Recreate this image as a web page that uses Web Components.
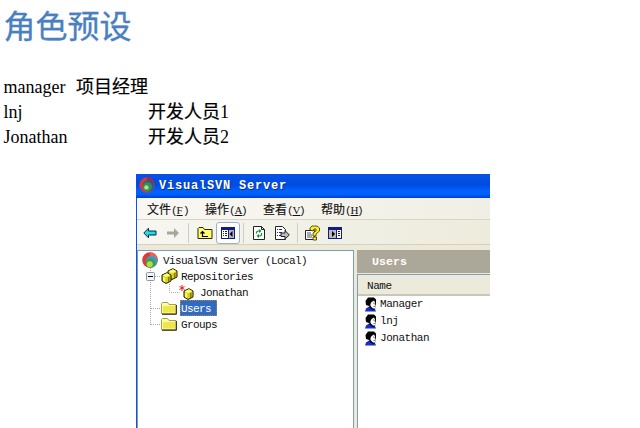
<!DOCTYPE html>
<html lang="zh"><head><meta charset="utf-8"><title>角色预设</title>
<style>html,body{margin:0;background:#fff}body{width:640px;height:428px;overflow:hidden}</style></head>
<body><role-page></role-page>
<script>
const define=(name,css,html)=>customElements.define(name,class extends HTMLElement{
  constructor(){super();this.attachShadow({mode:'open'}).innerHTML=`<style>${css}</style>${html}`}
});
const barrel=(x,y)=>`<g transform="translate(${x} ${y})"><path d="M1 3 6 .7 10 3v6L5 11.5 1 9z" fill="#d8ce20" stroke="#171700"/><path d="M1.6 3.3 6 1.3 9.3 3.2 5 5.2z" fill="#ffff70"/><path d="M2 4.5v4.3l2.2 1.4V5.8z" fill="#fff86a"/><path d="M7.5 5v5M9 4.5v4.5" stroke="#837c00"/></g>`;
const icons={
 logo:[16,16,`<circle cx="8" cy="8" r="7.8" fill="#e03a30"/><path d="M8 .2a7.8 7.8 0 0 1 7.8 8L13 8 8 4z" fill="#f06052"/><circle cx="9.5" cy="9.5" r="5.8" fill="#3a9ad9"/><circle cx="8.5" cy="11" r="4.8" fill="#36a344"/><circle cx="7.8" cy="12.2" r="3" fill="#b6d94a"/>`],
 tlogo:[16,16,`<circle cx="8" cy="8" r="7.7" fill="#d03a3c"/><path d="M8 .3A7.7 7.7 0 0 1 15.7 8L8 6z" fill="#a82545"/><circle cx="9.2" cy="9" r="5.6" fill="#185fa8"/><circle cx="8.4" cy="9.8" r="4.6" fill="#329544"/><circle cx="7.4" cy="10.4" r="2.2" fill="#b2dca0"/>`],
 back:[14,12,`<path d="M.8 6 5.5 1.2V4H13v4H5.5v2.8z" fill="#20dce4" stroke="#052b38"/>`],
 fwd:[14,12,`<path d="M13 6 8 1v3.5H1v3h7V11z" fill="#aaa69a"/>`],
 up:[16,14,`<path d="M1 12.5v-10l1-1h4l1.5 2H15v9z" fill="#ffff70" stroke="#292900"/><path d="M5.5 6v4.5H11M3.5 7.5l2-2 2 2" fill="none" stroke="#000" stroke-width="1.2"/>`],
 tree:[14,12,`<path d="M0 0h14v12H0z" fill="#111d84"/><path d="M1 3h6v8H1z" fill="#fff"/><path d="M8 3h5v8H8z" fill="#b9b9bb"/><path d="M2 4.5h1m1 0h2M2 6.5h1m1 0h2M2 8.5h1m1 0h2" stroke="#222"/><path d="M11.5 4v6l-3-3z"/>`],
 panel:[14,12,`<path d="M0 0h14v12H0z" fill="#111d84"/><path d="M1 3h7v8H1z" fill="#b9b9bb"/><path d="M9 3h4v8H9z" fill="#fff"/><path d="M10 4.5h2M10 6.5h2M10 8.5h2" stroke="#222"/><path d="M4 4v6l3-3z"/>`],
 refresh:[12,14,`<path d="M.5.5h8l3 3v10H.5z" fill="#fff" stroke="#222"/><path d="M8.5.5v3h3" fill="none" stroke="#222"/><path d="M3.5 7.5V6L5 5h2M8.5 7v2L7 10H5" fill="none" stroke="#168e39" stroke-width="1.2"/><path d="M6 3l2.5 2L6 7zM6 8v4l-2.5-2z" fill="#168e39"/>`],
 exp:[15,14,`<path d="M.5.5h7l3 3v10H.5z" fill="#fff" stroke="#222"/><path d="M2 3.5h1m1 0h3M2 6.5h1m1 0h3M2 9.5h1m1 0h3" stroke="#25259b"/><path d="M6 7h4V4.5L14.3 9 10 13v-2.5H6z" fill="#bbb" stroke="#222"/>`],
 help:[16,16,`<path d="M.5 5.5h9v9h-9z" fill="#fff" stroke="#222"/><path d="M2 8h4m-4 2h5m-5 2h5" stroke="#555"/><path d="M5 5V3l2-2h5l2.5 2v3l-3.5 3v2H8V8l3-2V4H9L8 6zM8 12h3.5v3H8z" fill="#fff21c" stroke="#353000" stroke-width=".8"/>`],
 folder:[16,14,`<path d="M.5 12.5v-10l1-1h5l1.5 2h7v9z" fill="#fffc9b" stroke="#a89b4c"/><path d="M2 5h12v6.5H2z" fill="#eee64e"/><path d="M1 13.3h14.4V4" fill="none" stroke="#2b2b18"/>`],
 repos:[17,16,barrel(6,0)+barrel(0,4)],
 repo:[16,15,barrel(4,3)+`<path d="M3 0v6M.5 1.5l5 3M5.5 1.5l-5 3" stroke="#f01818" stroke-width="1"/>`],
 user:[12,15,`<path d="M0 14.5 1 11.5l3-2 6 2.5 1 2.5z" fill="#182dce"/><path d="M3 .5h6l2 2v3.5l-1 6-2 1-3-2-1-2-3-1-.5-4z" fill="#050505"/><path d="M6.5 5 9 3.5l1 2-.5 1.5 1 1.5-.5 3H8L5.5 9V7z" fill="#fff"/><path d="M8 6h1M8.5 9.5H10" stroke="#555" stroke-width=".8"/>`]
};
customElements.define('svn-icon',class extends HTMLElement{
 constructor(){super();const s=this.attachShadow({mode:'open'}),[w,h,p]=icons[this.getAttribute('name')];
 s.innerHTML=`<style>:host{display:block;flex:none;width:${w}px;height:${h}px}svg{display:block}</style><svg width="${w}" height="${h}" viewBox="0 0 ${w} ${h}">${p}</svg>`}
});
define('role-list',`:host{display:block;height:150px;padding-left:3.5px;font:18px/25px "Liberation Serif","Noto Sans CJK SC",serif;color:#000}
 h1{margin:0;height:75px;padding-top:1px;box-sizing:border-box;font:400 32px/47px "Noto Sans CJK SC",sans-serif;color:#4a80c0;-webkit-text-stroke:.35px #4a80c0}
 .r{display:grid;grid-template-columns:144.5px auto;height:25px;white-space:pre}.f{grid-template-columns:72.5px auto}b{font-weight:400;-webkit-text-stroke:.2px #000}`,
 `<h1>角色预设</h1><div class="r f"><span>manager</span><span><b>项目经理</b></span></div><div class="r"><span>lnj</span><span><b>开发人员</b>1</span></div><div class="r"><span>Jonathan</span><span><b>开发人员</b>2</span></div>`);
define('title-bar',`:host{display:flex;align-items:center;gap:4px;height:24px;box-sizing:border-box;padding:0 3px 2px;background:linear-gradient(#0754e4,#004be0 45%,#0062fc 72%,#0060fa 85%,#003dd7);color:#fff;font:bold 12px/16px "Liberation Mono",monospace;letter-spacing:.8px;text-shadow:1px 1px #07308c}span{white-space:pre;padding-top:1px}`,
 `<svn-icon name="tlogo"></svn-icon><span><slot></slot></span>`);
define('menu-bar',`:host{display:flex;height:22px;box-sizing:border-box;padding:0 0 0 10px;border-bottom:1px solid #d9d5c3;background:linear-gradient(90deg,#f8f7f3,#f0efe5);font:11px/22px "Liberation Mono","Noto Sans CJK SC",monospace;letter-spacing:-.6px}
 span{width:58px;white-space:nowrap}b{font:12px/22px "Noto Sans CJK SC",sans-serif;letter-spacing:0;-webkit-text-stroke:.15px #111}u{text-underline-offset:1px;font-family:"Liberation Serif",serif;letter-spacing:0;display:inline-block;width:6px;text-indent:-.5px;line-height:12px}`,
 `<span><b>文件</b>(<u>F</u>)</span><span><b>操作</b>(<u>A</u>)</span><span><b>查看</b>(<u>V</u>)</span><span><b>帮助</b>(<u>H</u>)</span>`);
define('tool-bar',`:host{display:flex;align-items:center;height:25px;box-sizing:border-box;padding:1px 0 0 6px;border-bottom:1px solid #d5d1bd;background:linear-gradient(90deg,#f7f6f1,#ecebdc)}
 i{width:1px;height:20px;background:#d0cdbc}.on{box-sizing:border-box;display:grid;place-items:center;width:24px;height:22px;border:1px solid #9ab1d5;border-radius:3px;background:#fff}`,
 `<svn-icon name="back"></svn-icon><svn-icon name="fwd" style="margin-left:9px"></svn-icon><i style="margin:0 8px 0 8px"></i><svn-icon name="up"></svn-icon><div class="on" style="margin-left:3px"><svn-icon name="tree"></svn-icon></div><i style="margin:0 9px 0 3px"></i><svn-icon name="refresh"></svn-icon><svn-icon name="exp" style="margin-left:10px"></svn-icon><i style="margin:0 7px 0 7px"></i><svn-icon name="help"></svn-icon><svn-icon name="panel" style="margin-left:7px"></svn-icon>`);
define('tree-node',`:host{display:flex;height:16px;align-items:center;gap:4px;font:11px/14px "Liberation Mono",monospace;letter-spacing:-.6px}
 span{white-space:pre;padding:2px 1px 0}:host([selected]) span{background:#316ac5;color:#fff;outline:1px dotted #ad8845;outline-offset:-1px;padding-right:6px}`,
 `<slot name="icon"></slot><span><slot></slot></span>`);
define('tree-pane',`:host{display:block;position:relative;box-sizing:border-box;width:217px;border:1px solid #7f9db9;border-width:1px 1px 0 1px;background:#fff;padding-top:1px}
 svg{position:absolute;left:0;top:0}.a{padding-left:4px}.b{padding-left:23px}.c{padding-left:41px}`,
 `<svg width="60" height="90"><path d="M12.5 17v57M13 25.5h10M13 57.5h10M13 73.5h10M31.5 33v8.5h10" fill="none" stroke="#aaa" stroke-dasharray="1 1"/><rect x="8.5" y="21.5" width="8" height="8" rx="1" fill="#f5f3ed" stroke="#8397b3"/><path d="M10 25.5h5" stroke="#000"/></svg>
 <tree-node class="a"><svn-icon slot="icon" name="logo"></svn-icon>VisualSVN Server (Local)</tree-node>
 <tree-node class="b" style="gap:2px"><svn-icon slot="icon" name="repos"></svn-icon>Repositories</tree-node>
 <tree-node class="c"><svn-icon slot="icon" name="repo"></svn-icon>Jonathan</tree-node>
 <tree-node class="b" style="gap:3px" selected><svn-icon slot="icon" name="folder"></svn-icon>Users</tree-node>
 <tree-node class="b" style="gap:3px"><svn-icon slot="icon" name="folder"></svn-icon>Groups</tree-node>`);
define('user-row',`:host{display:flex;align-items:center;gap:3px;height:17px;padding-left:7px;font:11px/15px "Liberation Mono",monospace;letter-spacing:-.47px}`,
 `<svn-icon name="user"></svn-icon><span><slot></slot></span>`);
define('user-pane',`:host{display:flex;flex-direction:column;flex:1}
 .t{height:23px;background:#aca899;color:#fff;font:bold 11.67px/25px "Liberation Mono",monospace;padding-left:15px}
 .l{flex:1;margin-top:1px;border:solid #7f9db9;border-width:1px 0 0 1px;background:#fff}
 .h{height:21px;box-sizing:border-box;background:#ebeadb;border-bottom:2px solid #cbc7b8;padding-left:9px;font:11px/23px "Liberation Mono",monospace;letter-spacing:-.47px}`,
 `<div class="t">Users</div><div class="l"><div class="h">Name</div><user-row>Manager</user-row><user-row>lnj</user-row><user-row>Jonathan</user-row></div>`);
define('svn-window',`:host{display:flex;flex-direction:column;box-sizing:border-box;width:354px;height:254px;margin:24px 0 0 136px;background:#ece9d8;color:#111}
 .w{flex:1;display:flex;flex-direction:column;border-left:1px solid #0754e8}.p{flex:1;display:flex;gap:3px;padding-top:5px}`,
 `<title-bar>VisualSVN Server</title-bar><div class="w"><menu-bar></menu-bar><tool-bar></tool-bar><div class="p"><tree-pane></tree-pane><user-pane></user-pane></div></div>`);
define('role-page',`:host{display:flex;flex-direction:column;width:640px;height:428px;overflow:hidden}`,`<role-list></role-list><svn-window></svn-window>`);
</script></body></html>
